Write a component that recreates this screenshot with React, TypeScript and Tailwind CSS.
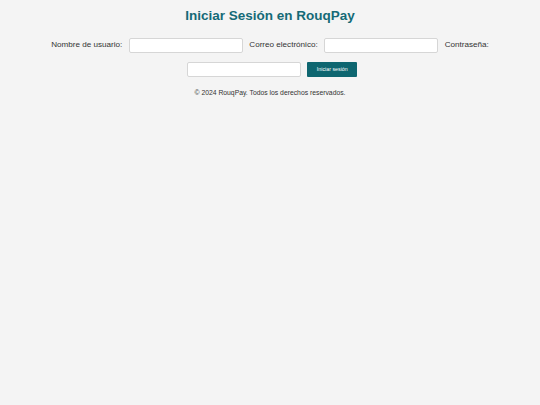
export default function App() {
  return (
    <div
      className="min-h-[405px] w-full bg-[#f4f4f4] text-[#333]"
      style={{ fontFamily: '"Liberation Sans", Arial, sans-serif' }}
    >
      <div className="pt-[8px] px-[10px]">
        <h1 className="text-center text-[13.5px] leading-[16px] font-bold text-[#156a77]">
          Iniciar Sesión en RouqPay
        </h1>

        <form className="mt-[14px] flex flex-wrap items-center justify-center gap-x-[6.5px] gap-y-[9px]">
          <label className="text-[8.1px] text-[#333]">Nombre de usuario:</label>
          <input
            type="text"
            className="h-[15px] w-[114px] rounded-[2px] border border-[#d6d6d6] bg-white"
          />
          <label className="text-[8.1px] text-[#333]">Correo electrónico:</label>
          <input
            type="email"
            className="h-[15px] w-[114px] rounded-[2px] border border-[#d6d6d6] bg-white"
          />
          <label className="text-[8.1px] text-[#333]">Contraseña:</label>
          <input
            type="password"
            className="ml-[4px] h-[15px] w-[114px] rounded-[2px] border border-[#d6d6d6] bg-white"
          />
          <button
            type="button"
            className="h-[15px] w-[50px] rounded-[1px] bg-[#0e6670] text-[5.3px] text-white"
          >
            Iniciar sesión
          </button>
        </form>

        <footer className="mt-[11px] text-center text-[6.8px] text-[#333]">
          © 2024 RouqPay. Todos los derechos reservados.
        </footer>
      </div>
    </div>
  );
}
